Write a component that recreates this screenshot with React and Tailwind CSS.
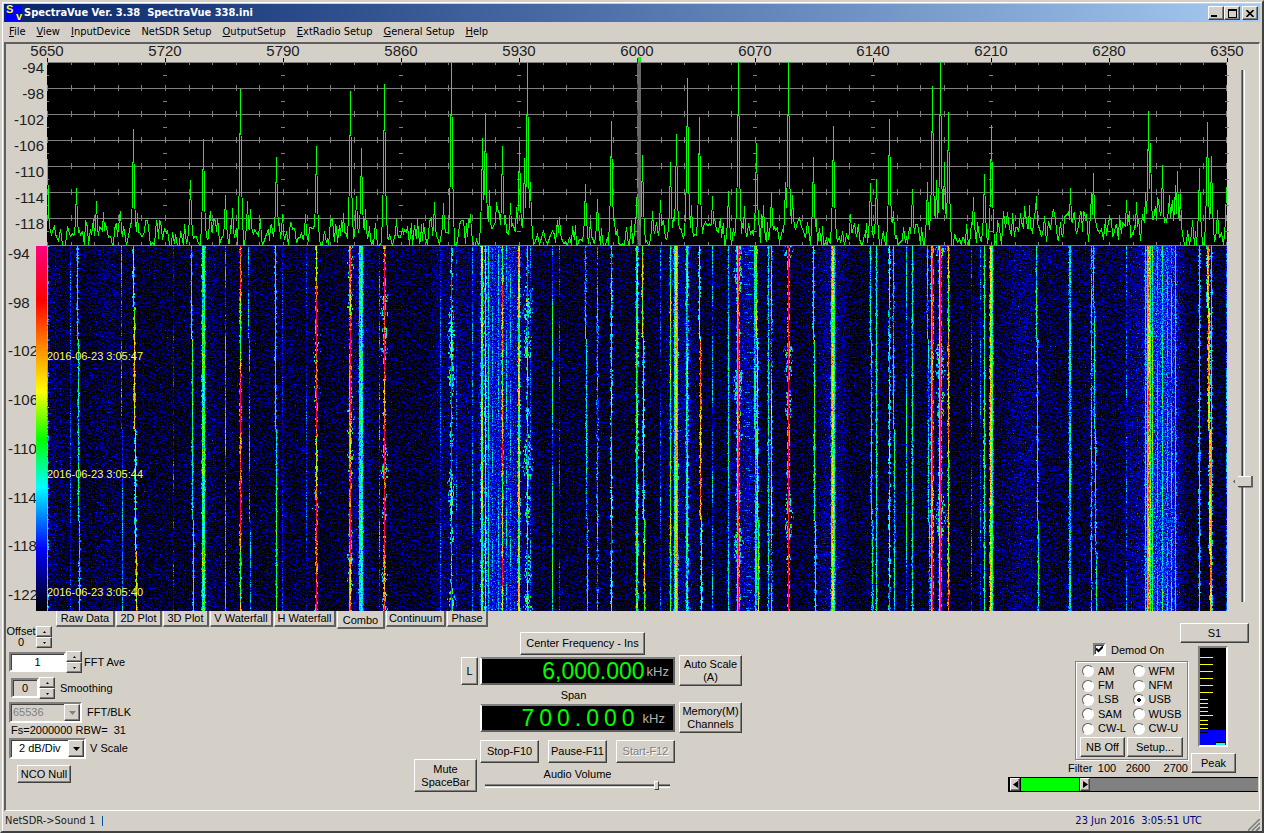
import React from 'react';

const FACE = 'bg-[#d4d0c8]';
const RAISED = 'bg-[#d4d0c8] border border-t-white border-l-white border-r-[#404040] border-b-[#404040] shadow-[inset_-1px_-1px_0_#808080]';
const SUNKEN = 'border-2 border-t-[#808080] border-l-[#808080] border-r-white border-b-white shadow-[inset_1px_1px_0_#404040]';

const WIDTH = 1180;
const SPECTRUM_HEIGHT = 184;
const WATERFALL_HEIGHT = 365;

const menus = ['File', 'View', 'InputDevice', 'NetSDR Setup', 'OutputSetup', 'ExtRadio Setup', 'General Setup', 'Help'];
const frequencies = [5650, 5720, 5790, 5860, 5930, 6000, 6070, 6140, 6210, 6280, 6350];
const spectrumLevels = [-94, -98, -102, -106, -110, -114, -118];
const waterfallLevels = [-94, -98, -102, -106, -110, -114, -118, -122];

// [x, height above the floor]
const peaks = [
    [0, 86], [29, 57], [49, 44], [56, 33], [73, 34], [86, 116], [90, 32], [143, 65], [156, 106], [163, 34], [178, 50],
    [185, 37], [193, 156], [200, 44], [203, 36], [229, 88], [235, 31], [258, 31], [269, 99], [296, 32], [303, 154],
    [309, 49], [314, 97], [318, 36], [337, 161], [349, 26], [387, 43], [396, 42], [404, 183], [423, 31], [435, 107],
    [438, 132], [442, 55], [449, 43], [455, 99], [463, 42], [472, 103], [477, 87], [480, 183], [483, 63], [512, 28],
    [538, 61], [550, 46], [564, 124], [567, 26], [590, 67], [595, 90], [605, 34], [613, 45], [623, 83], [629, 111],
    [640, 167], [644, 40], [652, 128], [665, 49], [681, 54], [691, 183], [697, 39], [709, 102], [716, 40], [724, 53],
    [738, 63], [741, 183], [745, 50], [766, 88], [786, 119], [803, 31], [823, 62], [829, 66], [842, 126], [846, 34],
    [865, 56], [880, 63], [885, 159], [889, 65], [893, 183], [897, 83], [901, 133], [926, 48], [937, 71], [944, 120],
    [960, 33], [973, 32], [977, 39], [982, 40], [989, 49], [1023, 57], [1034, 32], [1044, 52], [1046, 72], [1079, 45],
    [1089, 43], [1098, 53], [1101, 134], [1103, 102], [1111, 45], [1115, 80], [1122, 50], [1128, 60], [1130, 74],
    [1133, 51], [1152, 77], [1160, 123], [1164, 89], [1170, 35], [1179, 58],
];

// [from, to, extra floor]
const raisedFloor = [[434, 475, 20], [610, 640, 8], [700, 760, 6], [955, 1075, 10], [1080, 1098, 12], [1098, 1134, 34]];

// [x at top, x at bottom, lowest level, highest level, width]
const carriers = [
    [0, 0, 0.3, 0.48, 1], [23, 23, 0.1, 0.22, 1], [30, 32, 0.3, 0.4, 1], [74, 75, 0.15, 0.3, 1], [86, 89, 0.5, 0.7, 1],
    [126, 126, 0.05, 0.2, 1], [144, 146, 0.32, 0.48, 1], [155, 155, 0.35, 0.5, 3], [156, 156, 0.6, 0.75, 1],
    [178, 178, 0.18, 0.36, 1], [193, 193, 0.45, 1, 1], [201, 203, 0.15, 0.34, 1], [228, 229, 0.32, 0.5, 1],
    [235, 235, 0.08, 0.18, 1], [259, 259, 0.08, 0.2, 1], [269, 269, 0.55, 1, 1], [303, 303, 0.6, 1, 1], [302, 302, 0.15, 0.45, 1],
    [312, 312, 0.3, 0.4, 4], [314, 314, 0.45, 0.6, 1], [332, 332, 0.1, 0.28, 1], [337, 337, 0.65, 1, 1], [393, 393, 0.12, 0.25, 1],
    [404, 404, 0.6, 1, 1], [409, 409, 0.1, 0.2, 1], [425, 425, 0.16, 0.28, 1], [434, 434, 0.38, 0.6, 2], [438, 438, 0.42, 0.68, 1],
    [441, 441, 0.26, 0.4, 1], [445, 445, 0.16, 0.3, 1], [451, 451, 0.16, 0.32, 1], [455, 455, 0.45, 0.85, 1], [459, 459, 0.16, 0.36, 1],
    [463, 463, 0.16, 0.32, 1], [471, 471, 0.42, 0.68, 2], [480, 480, 0.45, 0.95, 1], [483, 483, 0.1, 0.25, 1], [505, 505, 0.15, 0.5, 1],
    [512, 512, 0.08, 0.24, 1], [538, 540, 0.24, 0.36, 1], [550, 550, 0.2, 0.32, 1], [564, 564, 0.45, 0.85, 1],
    [589, 589, 0.34, 0.5, 1], [590, 590, 0.45, 0.85, 1], [595, 597, 0.42, 0.64, 1], [613, 613, 0.08, 0.24, 1], [623, 623, 0.32, 0.6, 1],
    [627, 627, 0.3, 0.42, 4], [628, 628, 0.56, 0.7, 2], [639, 639, 0.28, 0.4, 2], [640, 640, 0.45, 0.85, 1], [652, 654, 0.5, 0.78, 1],
    [665, 665, 0.1, 0.32, 1], [681, 681, 0.26, 0.38, 1], [690, 690, 0.35, 0.55, 2], [691, 691, 0.8, 1, 1], [707, 708, 0.26, 0.42, 2],
    [709, 711, 0.42, 0.66, 1], [721, 721, 0.28, 0.36, 1], [724, 724, 0.2, 0.62, 1], [741, 741, 0.82, 1, 1], [766, 768, 0.38, 0.5, 1],
    [784, 784, 0.3, 0.42, 4], [785, 785, 0.5, 0.7, 2], [823, 825, 0.28, 0.4, 1], [829, 829, 0.32, 0.4, 1], [842, 842, 0.5, 0.85, 1],
    [846, 847, 0.24, 0.44, 1], [859, 859, 0.14, 0.46, 1], [865, 865, 0.3, 0.4, 1], [880, 882, 0.2, 0.38, 1], [884, 884, 0.35, 0.5, 1],
    [885, 885, 0.7, 0.95, 1], [892, 892, 0.4, 0.6, 2], [893, 893, 0.92, 1, 1], [901, 901, 0.45, 0.75, 1], [924, 924, 0.1, 0.24, 1],
    [933, 933, 0.1, 0.28, 1], [937, 937, 0.34, 0.46, 1], [943, 943, 0.35, 0.45, 3], [943, 943, 0.52, 0.68, 2], [989, 991, 0.3, 0.44, 1],
    [1022, 1022, 0.26, 0.38, 2], [1044, 1044, 0.25, 0.38, 1], [1046, 1049, 0.28, 0.4, 1], [1079, 1079, 0.1, 0.26, 1],
    [1098, 1098, 0.3, 0.45, 1], [1100, 1100, 0.38, 0.5, 4], [1101, 1101, 0.64, 0.8, 2], [1105, 1105, 0.3, 0.55, 1],
    [1110, 1110, 0.2, 0.38, 1], [1115, 1115, 0.28, 0.45, 1], [1120, 1120, 0.2, 0.36, 1], [1124, 1124, 0.2, 0.5, 1],
    [1128, 1128, 0.28, 0.4, 1], [1152, 1152, 0.36, 0.46, 1], [1160, 1163, 0.58, 0.75, 2], [1164, 1164, 0.36, 0.5, 1], [1179, 1179, 0.15, 0.28, 1],
];

// Speech sidebands scattered round a carrier: [x, reach, density]
const bursts = [[337, 4, 0.35], [404, 5, 0.4], [480, 6, 0.4], [691, 5, 0.6], [741, 5, 0.4], [893, 6, 0.45], [303, 4, 0.2], [269, 4, 0.12]];

// [from, to, level]
const bands = [
    [0, 12, 0.04], [50, 72, 0.025], [150, 170, 0.03], [302, 322, 0.05], [385, 432, 0.035], [434, 474, 0.12], [476, 486, 0.04],
    [620, 648, 0.06], [682, 700, 0.05], [696, 710, 0.07], [772, 798, 0.06], [887, 900, 0.05], [950, 1010, 0.025],
    [965, 988, 0.03], [1015, 1075, 0.02], [1078, 1100, 0.06], [1100, 1128, 0.16], [1128, 1138, 0.06],
];

const paletteStops = [
    [0, 0, 0, 0], [0.17, 0, 0, 255], [0.34, 0, 255, 255], [0.47, 0, 255, 0],
    [0.6, 255, 255, 0], [0.72, 255, 140, 0], [0.85, 255, 0, 0], [1, 255, 0, 128],
];

const randomSource = (seed) => () => {
    seed = (seed * 1664525 + 1013904223) % 4294967296;
    return seed / 4294967296;
};

const paletteTable = (channel) => {
    const values = [];
    for (let i = 0; i <= 50; i++) {
        const t = i / 50;
        const next = Math.max(1, paletteStops.findIndex((s) => s[0] >= t));
        const a = paletteStops[next - 1];
        const b = paletteStops[next];
        const k = (t - a[0]) / (b[0] - a[0]);
        values.push(((a[channel] + (b[channel] - a[channel]) * k) / 255).toFixed(3));
    }
    return values.join(' ');
};

const buildTrace = () => {
    const random = randomSource(77);
    const heights = [];
    let previous = 4;
    while (heights.length < WIDTH) {
        const band = raisedFloor.find(([from, to]) => heights.length >= from && heights.length < to);
        const target = Math.max(0, Math.pow(random(), 1.5) * 30 - 3) + (band ? band[2] * (0.3 + random() * 0.7) : 0);
        const steps = random() < 0.5 ? 1 : 2;
        for (let i = 1; i <= steps; i++) heights.push(previous + ((target - previous) * i) / steps);
        previous = target;
    }
    heights.length = WIDTH;
    const shape = [1, 0.42, 0.2];
    peaks.forEach(([px, h]) => {
        for (let d = -2; d <= 2; d++) {
            const x = px + d;
            if (x >= 0 && x < WIDTH) heights[x] = Math.max(heights[x], h * shape[Math.abs(d)]);
        }
    });
    return heights.map((h, x) => `${x + 0.5},${Math.round(183 - h)}`).join(' ');
};

const buildWaterfall = () => {
    const random = randomSource(2016);
    const layers = Array.from({ length: 41 }, () => []);
    const add = (x, y, h, level, w = 1) => {
        const slot = Math.max(0, Math.min(40, Math.round(level * 40)));
        layers[slot].push(`M${Math.round(x)} ${y}h${w}v${h}h-${w}z`);
    };
    carriers.forEach(([top, bottom, low, high, w]) => {
        let y = 0;
        let phase = random() * 6;
        const speed = 0.02 + random() * 0.04;
        while (y < WATERFALL_HEIGHT) {
            const h = 1 + Math.floor(random() * 3);
            const wave = (Math.sin(phase + y * speed) + Math.sin(phase * 2 + y * speed * 2.3)) / 3 + 0.5;
            const t = Math.min(1, Math.max(0, wave + (random() - 0.5) * 0.5));
            const x = top + ((bottom - top) * y) / WATERFALL_HEIGHT;
            add(x, y, h, low + (high - low) * t, w);
            // the skirts of a carrier flicker from line to line
            if (low >= 0.2) {
                if (random() < 0.3) add(x - 1, y, h, 0.12 + low * 0.35);
                if (random() < 0.3) add(x + w, y, h, 0.12 + low * 0.35);
            }
            y += h;
        }
    });
    bursts.forEach(([x, reach, density]) => {
        const phase = random() * 6;
        for (let y = 0; y < WATERFALL_HEIGHT; y += 2) {
            const swell = Math.sin(phase + y * 0.043) + Math.sin(y * 0.117 + phase * 3) * 0.8 + Math.sin(y * 0.31) * 0.4;
            if (swell < 0.1) continue;
            const spread = Math.min(reach, 1 + Math.round(swell * reach * 0.6));
            for (let d = -spread; d <= spread; d++) {
                const near = 1 - (Math.abs(d) - 1) / reach;
                if (d !== 0 && random() < density * near * 1.4) {
                    add(x + d, y, 2, 0.18 + random() * 0.34 * near);
                }
            }
        }
    });
    // ragged sideband between the two strong carriers near 6070
    for (let y = 0; y < WATERFALL_HEIGHT; y += 2) {
        if (random() < 0.4) add(696 + random() * 6, y, 1, 0.14 + random() * 0.12, 3 + Math.floor(random() * 5));
    }
    return layers.map((parts) => parts.join(''));
};

const trace = buildTrace();
const waterfallLayers = buildWaterfall();
const gray = (level) => {
    const v = Math.round(level * 255);
    return `rgb(${v},${v},${v})`;
};

const TitleBar = () => (
    <header className="flex h-[18px] items-center bg-gradient-to-r from-[#0a246a] to-[#a6caf0] pr-0.5 pl-0.5">
        <div className="relative h-4 w-4 bg-[#0000ff] font-['Liberation_Sans'] text-[11px] leading-none font-bold text-[#ffff00]" aria-hidden="true">
            <span className="absolute top-[-1px] left-0">S</span>
            <span className="absolute right-0 bottom-[-1px]">v</span>
        </div>
        <h1 className="ml-0.5 flex-1 truncate font-['DejaVu_Sans_Condensed','DejaVu_Sans',sans-serif] text-[11px] font-bold whitespace-pre text-white">
            {'SpectraVue Ver. 3.38  SpectraVue 338.ini'}
        </h1>
        <button aria-label="Minimize" className={`${RAISED} flex h-[14px] w-4 items-end justify-center pr-1 pb-0.5`}>
            <span className="h-0.5 w-1.5 bg-black" />
        </button>
        <button aria-label="Maximize" className={`${RAISED} flex h-[14px] w-4 items-center justify-center`}>
            <span className="h-[9px] w-[9px] border border-t-2 border-black" />
        </button>
        <button aria-label="Close" className={`${RAISED} ml-0.5 flex h-[14px] w-4 items-center justify-center`}>
            <svg viewBox="0 0 8 7" className="h-[7px] w-2">
                <path d="M0.5 0L7.5 7M7.5 0L0.5 7" stroke="#000" strokeWidth="1.6" />
            </svg>
        </button>
    </header>
);

const MenuBar = () => (
    <nav className="flex h-5 items-center gap-[11px] pl-[5px] font-['DejaVu_Sans_Condensed','DejaVu_Sans',sans-serif] text-[11px] text-black">
        {menus.map((label) => (
            <button key={label} className="whitespace-nowrap">
                {label.startsWith('Net') ? label : <><u>{label[0]}</u>{label.slice(1)}</>}
            </button>
        ))}
    </nav>
);

const Spectrum = () => {
    const lines = [0, 26, 52, 78, 104, 130, 156, 183];
    const ticks = Array.from({ length: 51 }, (_, i) => Math.round(i * 23.6));
    return (
        <svg viewBox="0 0 1180 184" preserveAspectRatio="none" shapeRendering="crispEdges" className="block h-[184px] w-full overflow-visible">
            <rect width={WIDTH} height={SPECTRUM_HEIGHT} fill="#000" />
            <g fill="#808080">
                {lines.map((y) => <rect key={y} y={y} width={WIDTH} height="1" />)}
                {lines.map((y, row) => ticks.map((x) => (
                    <rect key={`${y}-${x}`} x={Math.min(x, 1179)} y={row === 0 ? 0 : y - 3} width="1" height={row === 0 ? 3 : row === 7 ? 4 : 6} />
                )))}
                {lines.slice(0, 7).map((y) => frequencies.map((f, i) => (
                    <rect key={`${y}-${f}`} x={Math.max(0, i * 118 - 2)} y={y + 13} width={i === 0 ? 2 : 4} height="1" />
                )))}
            </g>
            <polyline points={trace} fill="none" stroke="#00ff00" strokeWidth="1" />
            <rect x="590" y="0" width="4" height="184" fill="#808080" fillOpacity="0.8" />
            <path d="M590.5 -4V184" stroke="#c00000" strokeWidth="1" strokeDasharray="6 20" />
            <rect x="591" y="-5" width="3" height="5" fill="#00ff00" />
        </svg>
    );
};

const Waterfall = () => (
    <svg viewBox="0 0 1180 365" preserveAspectRatio="none" shapeRendering="crispEdges" className="block h-[365px] w-full">
        <defs>
            <filter id="soften" x="-5%" y="0" width="110%" height="100%" colorInterpolationFilters="sRGB">
                <feGaussianBlur stdDeviation="4 0" />
            </filter>
            <filter id="heat" x="0" y="0" width="100%" height="100%" colorInterpolationFilters="sRGB">
                <feTurbulence type="fractalNoise" baseFrequency="0.83 0.71" numOctaves="2" seed="8" />
                <feColorMatrix values="1 0 0 0 0  1 0 0 0 0  1 0 0 0 0  0 0 0 0 1" result="noise" />
                <feComposite in="SourceGraphic" in2="noise" operator="arithmetic" k1="0" k2="1" k3="0.5" k4="-0.25" />
                <feComponentTransfer>
                    <feFuncR type="table" tableValues={paletteTable(1)} />
                    <feFuncG type="table" tableValues={paletteTable(2)} />
                    <feFuncB type="table" tableValues={paletteTable(3)} />
                    <feFuncA type="linear" slope="0" intercept="1" />
                </feComponentTransfer>
            </filter>
        </defs>
        <rect width={WIDTH} height={WATERFALL_HEIGHT} fill="#000010" />
        <g filter="url(#heat)">
            <rect width={WIDTH} height={WATERFALL_HEIGHT} fill={gray(0.02)} />
            <g filter="url(#soften)">
                {bands.map(([from, to, level]) => (
                    <rect key={`${from}-${to}`} x={from} width={to - from} height={WATERFALL_HEIGHT} fill="#fff" fillOpacity={level} />
                ))}
            </g>
            {waterfallLayers.map((d, i) => <path key={i} d={d} fill={gray(i / 40)} />)}
        </g>
    </svg>
);

const Displays = () => (
    <div className="flex font-['Liberation_Sans',Arial,sans-serif] text-[15px] text-[#202020]">
        <div className="w-[41px] shrink-0">
            <div className="h-[202px] pt-[18px] pr-[3px] text-right">
                {spectrumLevels.map((db) => <div key={db} className="h-[26px] leading-3">{db}</div>)}
            </div>
            <div className="flex h-[365px]">
                <div className="flex h-[357px] w-[30px] flex-col justify-between pl-0.5">
                    {waterfallLevels.map((db) => <div key={db} className="leading-4">{db}</div>)}
                </div>
                <div className="flex-1 bg-[linear-gradient(to_top,#000,#00f_17%,#0ff_34%,#0f0_47%,#ff0_60%,#ff8c00_72%,#f00_85%,#ff0080)]" />
            </div>
        </div>
        <div className="min-w-0 flex-1">
            <div className="flex h-[18px] justify-between">
                {frequencies.map((f) => (
                    <div key={f} className="flex w-0 flex-col items-center leading-[14px]">
                        <span>{f}</span>
                        <span className="h-1 w-px bg-black" />
                    </div>
                ))}
            </div>
            <Spectrum />
            <div className="relative text-[11px] leading-3 text-[#ffff40]">
                <Waterfall />
                <time className="absolute top-[104px] left-0">2016-06-23 3:05:47</time>
                <time className="absolute top-[222px] left-0">2016-06-23 3:05:44</time>
                <time className="absolute top-[340px] left-0">2016-06-23 3:05:40</time>
            </div>
        </div>
        <div className="flex w-8 shrink-0 justify-center pt-[26px]">
            <input
                type="range"
                aria-label="Range"
                defaultValue="78"
                className="h-[532px] w-5 appearance-none bg-[linear-gradient(90deg,transparent_8px,#808080_8px,#808080_9px,#404040_9px,#404040_10px,#d4d0c8_10px,#d4d0c8_11px,#fff_11px,#fff_12px,transparent_12px)] [writing-mode:vertical-lr] [&::-webkit-slider-thumb]:h-3 [&::-webkit-slider-thumb]:w-5 [&::-webkit-slider-thumb]:appearance-none [&::-webkit-slider-thumb]:border-r-2 [&::-webkit-slider-thumb]:border-l-2 [&::-webkit-slider-thumb]:border-[#606060] [&::-webkit-slider-thumb]:bg-[linear-gradient(#fff_1px,#d4d0c8_1px,#d4d0c8_10px,#404040_10px)] [&::-webkit-slider-thumb]:[clip-path:polygon(0_50%,6px_0,100%_0,100%_100%,6px_100%)]"
            />
        </div>
    </div>
);

const tabs = [
    ['Raw Data', 'w-[59px]'], ['2D Plot', 'w-[46px]'], ['3D Plot', 'w-[46px]'], ['V Waterfall', 'w-[63px]'],
    ['H Waterfall', 'w-[62px]'], ['Combo', 'w-[48px]'], ['Continuum', 'w-[60px]'], ['Phase', 'w-[41px]'],
];

const TabStrip = () => (
    <div className="flex h-3 items-start gap-px pl-[50px]" role="tablist">
        {tabs.map(([label, width]) => {
            const active = label === 'Combo';
            return (
                <button
                    key={label}
                    role="tab"
                    aria-selected={active}
                    className={`${FACE} ${width} ${active ? 'h-[18px] pt-0.5' : 'h-4'} shrink-0 border-r-2 border-b-2 border-l border-r-[#606060] border-b-[#606060] border-l-white leading-[13px] whitespace-nowrap`}
                >
                    {label}
                </button>
            );
        })}
    </div>
);

const Spinner = ({ label }) => (
    <div className="flex w-4 flex-col">
        <button aria-label={`${label} up`} className={`${RAISED} flex h-[11px] items-center justify-center`}>
            <svg viewBox="0 0 3 2" className="h-0.5 w-[3px]"><path d="M0 2L1.5 0L3 2z" /></svg>
        </button>
        <button aria-label={`${label} down`} className={`${RAISED} flex h-[11px] items-center justify-center`}>
            <svg viewBox="0 0 3 2" className="h-0.5 w-[3px]"><path d="M0 0L1.5 2L3 0z" /></svg>
        </button>
    </div>
);

const DropDown = ({ id, value, width, disabled }) => (
    <div className={`relative h-[21px] ${width}`}>
        <select id={id} disabled={disabled} className={`${SUNKEN} h-full w-full appearance-none ${disabled ? 'bg-[#d4d0c8] pl-0.5 text-[#808080]' : 'bg-white pl-2'}`}>
            <option>{value}</option>
        </select>
        <span className={`${RAISED} pointer-events-none absolute top-0.5 right-0.5 flex h-[17px] w-4 items-center justify-center`}>
            <svg viewBox="0 0 7 4" className="h-1 w-[7px]"><path d="M0 0H7L3.5 4z" fill={disabled ? '#808080' : '#000'} /></svg>
        </span>
    </div>
);

const LeftPanel = () => (
    <div className="flex w-[142px] flex-col items-start whitespace-nowrap">
        <div className="flex h-[27px] items-start pt-[3px]">
            <div className="w-[30px] text-center leading-[11px]">Offset<br />0</div>
            <Spinner label="Offset" />
        </div>
        <div className="flex h-6 items-center pl-[3px]">
            <input id="fft-ave" defaultValue="1" className={`${SUNKEN} h-5 w-[57px] bg-white text-center`} />
            <Spinner label="FFT Ave" />
            <label htmlFor="fft-ave" className="pl-0.5">FFT Ave</label>
        </div>
        <div className="mt-0.5 flex h-6 items-center pl-[5px]">
            <input id="smoothing" defaultValue="0" className={`${SUNKEN} h-5 w-7 bg-transparent text-center`} />
            <Spinner label="Smoothing" />
            <label htmlFor="smoothing" className="pl-[5px]">Smoothing</label>
        </div>
        <div className="mt-0.5 flex items-center pl-[3px]">
            <DropDown id="fft-blk" value="65536" width="w-[73px]" disabled />
            <label htmlFor="fft-blk" className="pl-[5px]">FFT/BLK</label>
        </div>
        <div className="pl-[5px] leading-[15px] whitespace-pre">{'Fs=2000000 RBW=  31'}</div>
        <div className="flex items-center pl-[3px]">
            <DropDown id="v-scale" value="2 dB/Div" width="w-[77px]" />
            <label htmlFor="v-scale" className="pl-1">V Scale</label>
        </div>
        <button className={`${RAISED} mt-[6px] ml-[11px] h-[18px] w-[54px]`}>NCO Null</button>
    </div>
);

const Readout = ({ children }) => (
    <div className="flex h-7 items-center justify-end border-2 border-t-[#808080] border-r-[#606060] border-b-[#606060] border-l-white bg-black text-[23px] leading-none text-[#00ff00]">
        {children}
    </div>
);

const CenterPanel = () => (
    <div className="flex items-start gap-1">
        <div className="flex">
            <div className="flex w-[66px] flex-col pt-[34px]">
                <button className={`${RAISED} mr-0.5 h-7 w-[17px] self-end`}>L</button>
                <button className={`${RAISED} mt-[74px] h-[33px] w-[63px] leading-[13px]`}>Mute<br />SpaceBar</button>
            </div>
            <div className="flex w-[195px] flex-col pt-[9px]">
                <button className={`${RAISED} mb-0.5 ml-10 h-[23px] w-[125px]`}>Center Frequency - Ins</button>
                <Readout>
                    <output>6,000.000</output>
                    <span className="pr-1 pl-0.5 text-[13px] text-[#b0b0b0]">kHz</span>
                </Readout>
                <div className="h-[19px] pr-2 text-center leading-[21px]">Span</div>
                <Readout>
                    <output className="flex gap-[5px]">
                        {'700.000'.split('').map((c, i) => <span key={i}>{c}</span>)}
                    </output>
                    <span className="pr-2 pl-2 text-[13px] text-[#b0b0b0]">kHz</span>
                </Readout>
                <div className="mt-2 flex justify-between">
                    <button className={`${RAISED} h-[23px] w-[59px]`}>Stop-F10</button>
                    <button className={`${RAISED} h-[23px] w-[59px]`}>Pause-F11</button>
                    <button disabled className={`${RAISED} h-[23px] w-[59px] text-[#808080] [text-shadow:1px_1px_0_white]`}>Start-F12</button>
                </div>
                <label htmlFor="volume" className="pt-1 text-center leading-[14px]">Audio Volume</label>
                <input
                    id="volume"
                    type="range"
                    defaultValue="94"
                    className="mr-[5px] ml-[5px] h-[9px] appearance-none bg-[linear-gradient(transparent_3px,#808080_3px,#808080_4px,#404040_4px,#404040_5px,#d4d0c8_5px,#d4d0c8_6px,#fff_6px,#fff_7px,transparent_7px)] [&::-webkit-slider-thumb]:h-[9px] [&::-webkit-slider-thumb]:w-[5px] [&::-webkit-slider-thumb]:appearance-none [&::-webkit-slider-thumb]:border [&::-webkit-slider-thumb]:border-t-white [&::-webkit-slider-thumb]:border-r-[#404040] [&::-webkit-slider-thumb]:border-b-[#404040] [&::-webkit-slider-thumb]:border-l-white [&::-webkit-slider-thumb]:bg-[#d4d0c8]"
                />
            </div>
        </div>
        <div className="flex w-[63px] flex-col gap-4 pt-8">
            <button className={`${RAISED} h-[31px] leading-[13px]`}>Auto Scale<br />(A)</button>
            <button className={`${RAISED} h-[31px] leading-[13px]`}>Memory(M)<br />Channels</button>
        </div>
    </div>
);

const modes = ['AM', 'WFM', 'FM', 'NFM', 'LSB', 'USB', 'SAM', 'WUSB', 'CW-L', 'CW-U'];
const meterTicks = [9, 16, 23, 30, 37, 44, 51, 55, 59, 63, 67, 72, 76, 80];

const SignalMeter = () => (
    <svg viewBox="0 0 26 97" shapeRendering="crispEdges" className="block h-[97px] w-[26px]" role="img" aria-label="Signal strength">
        <rect width="26" height="97" fill="#000" />
        <rect y="82" width="26" height="15" fill="#0000ff" />
        {meterTicks.map((y) => <rect key={y} y={y} width={y < 50 || y === 67 ? 13 : 8} height="1" fill="#ffff00" />)}
        <rect y="84" width="8" height="1" fill="#000" />
        <path d="M15 97V94H25V97" fill="#00ffff" stroke="#000" />
    </svg>
);

const RightPanel = () => (
    <div className="flex w-[251px] flex-col pr-px">
        <button className={`${RAISED} mr-[9px] h-5 w-[69px] self-end`}>S1</button>
        <div className="flex h-[134px]">
            <div className="flex w-[180px] flex-col items-end">
                <div className="flex h-[18px] w-[95px] items-start gap-[5px]">
                    <span className="relative h-[13px] w-[13px]">
                        <input id="demod" type="checkbox" defaultChecked className={`${SUNKEN} block h-[13px] w-[13px] appearance-none bg-white`} />
                        <svg viewBox="0 0 7 7" className="pointer-events-none absolute top-[3px] left-[3px] h-[7px] w-[7px]">
                            <path d="M0 2.5L2.5 5L7 0.5" fill="none" stroke="#000" strokeWidth="2" />
                        </svg>
                    </span>
                    <label htmlFor="demod" className="leading-[14px]">Demod On</label>
                </div>
                <fieldset className="h-[99px] w-[113px] border border-[#808080] px-1 shadow-[inset_1px_1px_0_white,1px_1px_0_white]">
                    <div className="grid h-[74px] auto-rows-fr grid-cols-2 pt-0.5 pl-0.5">
                        {modes.map((mode) => (
                            <label key={mode} className="flex items-center gap-1 leading-none whitespace-nowrap">
                                <input
                                    type="radio"
                                    name="mode"
                                    defaultChecked={mode === 'USB'}
                                    className="h-3 w-3 shrink-0 appearance-none rounded-full border border-t-[#606060] border-r-white border-b-white border-l-[#606060] bg-white checked:bg-[radial-gradient(circle,black_2px,white_2px)]"
                                />
                                {mode}
                            </label>
                        ))}
                    </div>
                    <div className="flex justify-between pt-px">
                        <button className={`${RAISED} h-5 w-[45px]`}>NB Off</button>
                        <button className={`${RAISED} h-5 w-14`}>Setup...</button>
                    </div>
                </fieldset>
                <div className="flex h-[17px] w-[120px] items-center justify-between leading-none">
                    <span>Filter</span><span>100</span><span className="pl-1">2600</span><span className="pl-2">2700</span>
                </div>
            </div>
            <div className="flex flex-col pt-[3px] pl-[3px]">
                <div className="ml-[7px] h-[101px] w-[30px] border-2 border-t-[#808080] border-r-white border-b-white border-l-[#808080] bg-black"><SignalMeter /></div>
                <button className={`${RAISED} mt-[6px] h-5 w-[45px]`}>Peak</button>
            </div>
        </div>
        <div className="flex h-[15px] border-y border-l-2 border-black bg-[#808080]">
            <button aria-label="Lower filter edge" className={`${RAISED} flex w-[10px] items-center justify-center`}>
                <svg viewBox="0 0 5 7" className="h-[7px] w-[5px]"><path d="M5 0V7L0 3.5z" /></svg>
            </button>
            <div className="w-[60px] border-x border-black bg-[#00ff00]" />
            <button aria-label="Upper filter edge" className={`${RAISED} flex w-[10px] items-center justify-center`}>
                <svg viewBox="0 0 5 7" className="h-[7px] w-[5px]"><path d="M0 0V7L5 3.5z" /></svg>
            </button>
        </div>
    </div>
);

const StatusBar = () => (
    <footer className="flex h-5 items-center pl-px font-['DejaVu_Sans_Condensed','DejaVu_Sans',sans-serif] text-[11px] text-[#202020]">
        <span>NetSDR-&gt;Sound 1</span>
        <span className="ml-[7px] h-2.5 w-px bg-[#0054a0]" />
        <span className="mr-[46px] ml-auto whitespace-pre text-[#000080]">{'23 Jun 2016  3:05:51 UTC'}</span>
        <svg viewBox="0 0 12 12" className="h-3 w-3 self-end">
            <path d="M0 12L12 0M4 12L12 4M8 12L12 8" stroke="#808080" strokeWidth="2" />
            <path d="M1.5 12L12 1.5M5.5 12L12 5.5" stroke="#fff" strokeWidth="0.7" />
        </svg>
    </footer>
);

export default function App() {
    return (
        <div className={`${FACE} flex min-h-screen flex-col border-2 border-t-[#d4d0c8] border-r-[#404040] border-b-[#404040] border-l-[#d4d0c8] font-['Liberation_Sans',Arial,sans-serif] text-[11px] text-black shadow-[inset_1px_1px_0_white]`}>
            <div className="flex flex-1 flex-col px-0.5 pt-0.5">
                <TitleBar />
                <MenuBar />
                <main className="flex-1 border-t-2 border-r border-b border-l-2 border-t-[#606060] border-r-white border-b-white border-l-[#606060]">
                    <Displays />
                    <TabStrip />
                    <div className="flex justify-between">
                        <LeftPanel />
                        <CenterPanel />
                        <RightPanel />
                    </div>
                </main>
                <StatusBar />
            </div>
        </div>
    );
}
